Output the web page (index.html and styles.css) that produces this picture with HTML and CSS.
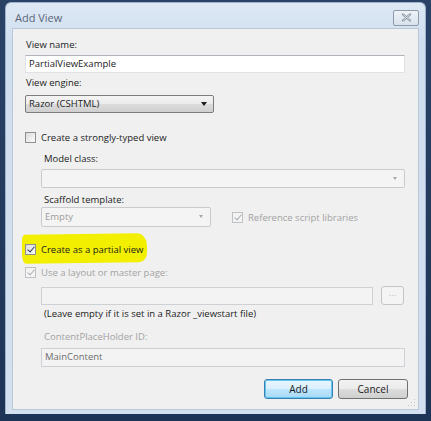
FILE: index.html
```html
<!DOCTYPE html>
<html lang="en">
<head>
  <meta charset="UTF-8">
  <title>Add View</title>
  <link rel="stylesheet" href="styles.css">
</head>
<body>
  <div class="window">
    <div class="title-bar">
      <span class="title">Add View</span>
      <div class="close-btn">
        <svg width="11" height="9" viewBox="0 0 11 9">
          <path d="M2 1.5 L9 7.5 M9 1.5 L2 7.5" stroke="#7d8796" stroke-width="2.2" stroke-linecap="round"/>
          <path d="M2 1.5 L9 7.5 M9 1.5 L2 7.5" stroke="#f4f6f8" stroke-width="0.8" stroke-linecap="round"/>
        </svg>
      </div>
    </div>

    <div class="client">
      <label class="lbl lbl-first">View name:</label>
      <div class="textbox full">PartialViewExample</div>

      <label class="lbl">View engine:</label>
      <div class="combo engine">Razor (CSHTML)<span class="arrow"></span></div>

      <div class="check-row strongly">
        <span class="box"></span>
        <span>Create a strongly-typed view</span>
      </div>

      <div class="indent">
        <label class="lbl model-lbl">Model class:</label>
        <div class="combo disabled model"><span class="arrow small"></span></div>

        <label class="lbl scaffold-lbl">Scaffold template:</label>
        <div class="scaffold-row">
          <div class="combo disabled scaffold">Empty<span class="arrow small"></span></div>
          <div class="check-row disabled ref">
            <span class="box checked"></span>
            <span>Reference script libraries</span>
          </div>
        </div>
      </div>

      <div class="check-row partial">
        <span class="marker"></span>
        <span class="box checked"></span>
        <span class="txt">Create as a partial view</span>
      </div>

      <div class="check-row disabled layout-check">
        <span class="box checked"></span>
        <span>Use a layout or master page:</span>
      </div>

      <div class="indent">
        <div class="layout-row">
          <div class="textbox disabled layout"></div>
          <div class="browse">...</div>
        </div>
        <div class="note">(Leave empty if it is set in a Razor _viewstart file)</div>

        <label class="lbl disabled-text placeholder-lbl">ContentPlaceHolder ID:</label>
        <div class="textbox disabled main-content">MainContent</div>
      </div>

      <div class="buttons">
        <button class="btn default">Add</button>
        <button class="btn">Cancel</button>
      </div>

      <svg class="grip" width="8" height="8" viewBox="0 0 8 8">
        <rect x="6" y="0" width="1" height="1" fill="#c4cad2"/>
        <rect x="3" y="3" width="1" height="1" fill="#c4cad2"/>
        <rect x="6" y="3" width="1" height="1" fill="#c4cad2"/>
        <rect x="0" y="6" width="1" height="1" fill="#c4cad2"/>
        <rect x="3" y="6" width="1" height="1" fill="#c4cad2"/>
        <rect x="6" y="6" width="1" height="1" fill="#c4cad2"/>
      </svg>
    </div>
  </div>
</body>
</html>
```

FILE: styles.css
```css
/* Desktop behind the dialog */
body {
  margin: 0;
  padding: 0;
  width: 431px;
  height: 421px;
  overflow: hidden;
  background: linear-gradient(180deg, #2a4266, #1d3456);
  font-family: "Open Sans", Lato, sans-serif;
  font-size: 9.5px;
  color: #1b1b1b;
}

/* Window frame */
.window {
  margin: 2px 5px 0 5px;
  height: 412px;
  border-radius: 6px 6px 0 0;
  background: linear-gradient(180deg, #dde8f4 0%, #cfdeef 10%, #d3e0ef 100%);
  border: 1px solid #9fb3cc;
  border-bottom: none;
  box-sizing: border-box;
  display: flex;
  flex-direction: column;
}

.title-bar {
  height: 25px;
  display: flex;
  align-items: center;
  justify-content: space-between;
  padding: 0 6px 0 9px;
}

.title {
  font-size: 11px;
  color: #5a6779;
  margin-top: 3px;
}

.close-btn {
  width: 24px;
  height: 14px;
  border: 1px solid #8d9aab;
  border-radius: 2px;
  background: linear-gradient(180deg, #eef2f7, #d9e2ec);
  display: flex;
  align-items: center;
  justify-content: center;
  margin-top: 4px;
}

/* Dialog body */
.client {
  position: relative;
  margin: 0 6px 4px 6px;
  flex-grow: 1;
  background: #f0f0f0;
  border: 1px solid #b9c8d9;
  padding: 0 0 0 12px;
  display: flex;
  flex-direction: column;
  align-items: flex-start;
}

.lbl {
  display: block;
  height: 14px;
  line-height: 14px;
  margin-top: 3px;
  padding-left: 1px;
}

.lbl-first {
  margin-top: 9px;
  margin-bottom: 3px;
}

.disabled-text {
  color: #a3a3a3;
}

/* Text boxes */
.textbox {
  box-sizing: border-box;
  height: 18px;
  line-height: 16px;
  padding-left: 3px;
  background: #fff;
  border: 1px solid #dfe3e8;
  border-top-color: #b0b4ba;
  white-space: nowrap;
}

.textbox.full {
  width: 380px;
}

.textbox.disabled {
  background: #f3f3f3;
  border-color: #cdd0d4;
  color: #6d6d6d;
}

/* Combo boxes */
.combo {
  position: relative;
  box-sizing: border-box;
  height: 18px;
  line-height: 16px;
  padding-left: 3px;
  border: 1px solid #7d7d7d;
  border-radius: 2px;
  background: linear-gradient(180deg, #f4f4f4 0%, #ebebeb 50%, #dcdcdc 51%, #cfcfcf 100%);
}

.combo.engine {
  width: 189px;
  margin-top: 5px;
}

.combo.disabled {
  background: #f4f4f4;
  border-color: #c9cbce;
  color: #9c9c9c;
}

.arrow {
  position: absolute;
  right: 6px;
  top: 6px;
  width: 0;
  height: 0;
  border-left: 3.5px solid transparent;
  border-right: 3.5px solid transparent;
  border-top: 4px solid #1a1a1a;
}

.arrow.small {
  right: 7px;
  top: 7px;
  border-left-width: 2.5px;
  border-right-width: 2.5px;
  border-top: 3px solid #a6a6a6;
}

/* Check boxes */
.check-row {
  position: relative;
  display: flex;
  align-items: center;
  height: 14px;
  white-space: nowrap;
}

.check-row .box {
  position: relative;
  box-sizing: border-box;
  width: 11px;
  height: 11px;
  margin-right: 5px;
  border: 1px solid #8e8f8f;
  background: linear-gradient(135deg, #dcdcdc, #fbfbfb);
}

.check-row .box.checked::after {
  content: "";
  position: absolute;
  left: 2.5px;
  top: 0px;
  width: 3px;
  height: 6px;
  border-right: 1.5px solid #2c3d57;
  border-bottom: 1.5px solid #2c3d57;
  transform: rotate(40deg);
}

.check-row.disabled {
  color: #a3a3a3;
}

.check-row.disabled .box {
  border-color: #bfc1c3;
  background: #f4f4f4;
}

.check-row.disabled .box.checked::after {
  border-color: #a9adb3;
}

.check-row.strongly {
  margin-top: 17px;
}

.indent {
  padding-left: 16px;
  display: flex;
  flex-direction: column;
  align-items: flex-start;
}

.indent .lbl {
  padding-left: 3px;
}

.lbl.model-lbl {
  margin-top: 8px;
}

.combo.model {
  width: 364px;
  height: 19px;
  margin-top: 3px;
}

.lbl.scaffold-lbl {
  margin-top: 5px;
}

.scaffold-row {
  display: flex;
  align-items: center;
}

.combo.scaffold {
  width: 170px;
  height: 20px;
  line-height: 18px;
}

.check-row.ref {
  margin-left: 21px;
}

.check-row.partial {
  margin-top: 15px;
}

.marker {
  position: absolute;
  left: -3px;
  top: -8px;
  width: 125px;
  height: 29px;
  background: #f2f000;
  border-radius: 3px 10px 8px 4px / 6px 12px 10px 8px;
  transform: rotate(-0.8deg);
}

.check-row.partial .txt {
  position: relative;
}

.check-row.layout-check {
  margin-top: 9px;
}

.layout-row {
  display: flex;
  margin-top: 8px;
}

.textbox.layout {
  width: 332px;
  height: 18px;
}

.browse {
  box-sizing: border-box;
  width: 23px;
  height: 19px;
  margin-left: 8px;
  margin-top: -1px;
  border: 1px solid #c3c5c8;
  border-radius: 3px;
  background: #f4f4f4;
  color: #c0c0c0;
  text-align: center;
  line-height: 12px;
}

.note {
  height: 14px;
  line-height: 14px;
  margin-top: 2px;
  padding-left: 3px;
}

.lbl.placeholder-lbl {
  margin-top: 9px;
}

.textbox.main-content {
  width: 364px;
  height: 19px;
  margin-top: 4px;
}

/* Buttons */
.buttons {
  display: flex;
  gap: 5px;
  margin-top: 12px;
  margin-left: 239px;
}

.btn {
  box-sizing: border-box;
  width: 70px;
  height: 20px;
  padding: 0;
  font-family: "Open Sans", Lato, sans-serif;
  font-size: 10px;
  color: #1b1b1b;
  border: 1px solid #707070;
  border-radius: 3px;
  background: linear-gradient(180deg, #f2f2f2 0%, #ebebeb 50%, #dddddd 51%, #cfcfcf 100%);
}

.btn.default {
  width: 69px;
  border-color: #3c7fb1;
  background: linear-gradient(180deg, #eaf6fd 0%, #d9f0fc 50%, #bee6fd 51%, #a7d9f5 100%);
  box-shadow: inset 0 0 0 1px #5ec6f1;
}

.grip {
  position: absolute;
  right: 2px;
  bottom: 2px;
}
```
